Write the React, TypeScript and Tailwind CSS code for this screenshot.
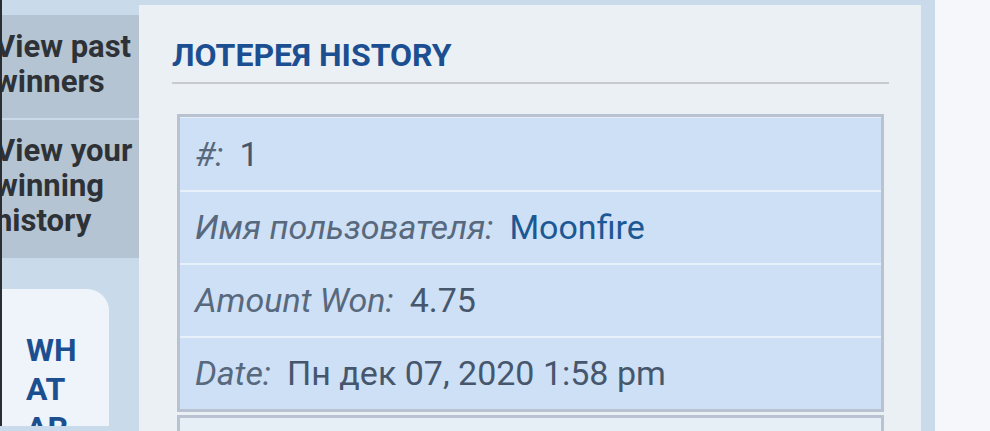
import React from "react";

const rows: { label: string; value: string; link?: boolean }[] = [
  { label: "#:", value: "1" },
  { label: "Имя пользователя:", value: "Moonfire", link: true },
  { label: "Amount Won:", value: "4.75" },
  { label: "Date:", value: "Пн дек 07, 2020 1:58 pm" },
];

export default function App() {
  return (
    <div
      className="w-[990px] h-[431px] overflow-hidden flex bg-[#f5f7fb]"
      style={{ fontFamily: "Roboto, 'Noto Sans', sans-serif" }}
    >
      <div className="w-[935px] h-full flex bg-[#c9dbeb] pt-[5px]">
        {/* Sidebar */}
        <div className="w-[139px] shrink-0 h-full -mt-[5px] pt-[15px] border-l-2 border-[#2a2d31] overflow-hidden flex flex-col">
          <div className="flex flex-col gap-[2px]">
            <div className="bg-[#b4c4d3] h-[103px] pt-[14px] -ml-[7px]">
              <div className="text-[31px] leading-[35px] font-bold text-[#2e3236] whitespace-nowrap">
                View past
                <br />
                winners
              </div>
            </div>
            <div className="bg-[#b4c4d3] h-[138px] pt-[13px] -ml-[7px]">
              <div className="text-[31px] leading-[35px] font-bold text-[#2e3236] whitespace-nowrap">
                View your
                <br />
                winning
                <br />
                history
              </div>
            </div>
          </div>
          <div className="mt-[31px] w-[107px] flex-1 bg-[#eef4f9] rounded-tr-[22px] pl-[24px] pt-[42px]">
            <div className="text-[32px] leading-[39px] font-bold text-[#1c4f90]">
              WH
              <br />
              AT
              <br />
              AR
            </div>
          </div>
        </div>

        {/* Main panel */}
        <div className="w-[782px] shrink-0 h-[426px] bg-[#ebf0f4] pt-[34px]">
          <div className="ml-[33px] mr-[32px] border-b-2 border-[#c7cbcf] pb-[11px]">
            <h1 className="text-[32px] leading-[32px] font-bold text-[#1b4f91]">
              ЛОТЕРЕЯ HISTORY
            </h1>
          </div>
          <div className="ml-[38px] mr-[37px] mt-[30px] border-[3px] border-[#b9c2d0] bg-[#cde0f5]">
            {rows.map((r, i) => (
              <div
                key={i}
                className={`h-[73px] flex items-center pl-[15px] text-[34px] ${
                  i === 0 ? "border-t border-[#e6eff9]" : "border-t-2 border-[#e8f0fa]"
                }`}
              >
                <span className="italic text-[#58687d]">{r.label}</span>
                <span
                  className={`ml-[16px] ${
                    r.link ? "text-[#1c5894]" : "text-[#46576d]"
                  }`}
                >
                  {r.value}
                </span>
              </div>
            ))}
          </div>
          <div className="ml-[38px] mr-[37px] mt-[3px] h-[40px] border-[3px] border-[#b9c2d0] bg-[#e6eef6]"></div>
        </div>
        <div className="flex-1 bg-[#c9dbeb]" />
      </div>
      <div className="flex-1 bg-[#f5f7fb]" />
    </div>
  );
}
